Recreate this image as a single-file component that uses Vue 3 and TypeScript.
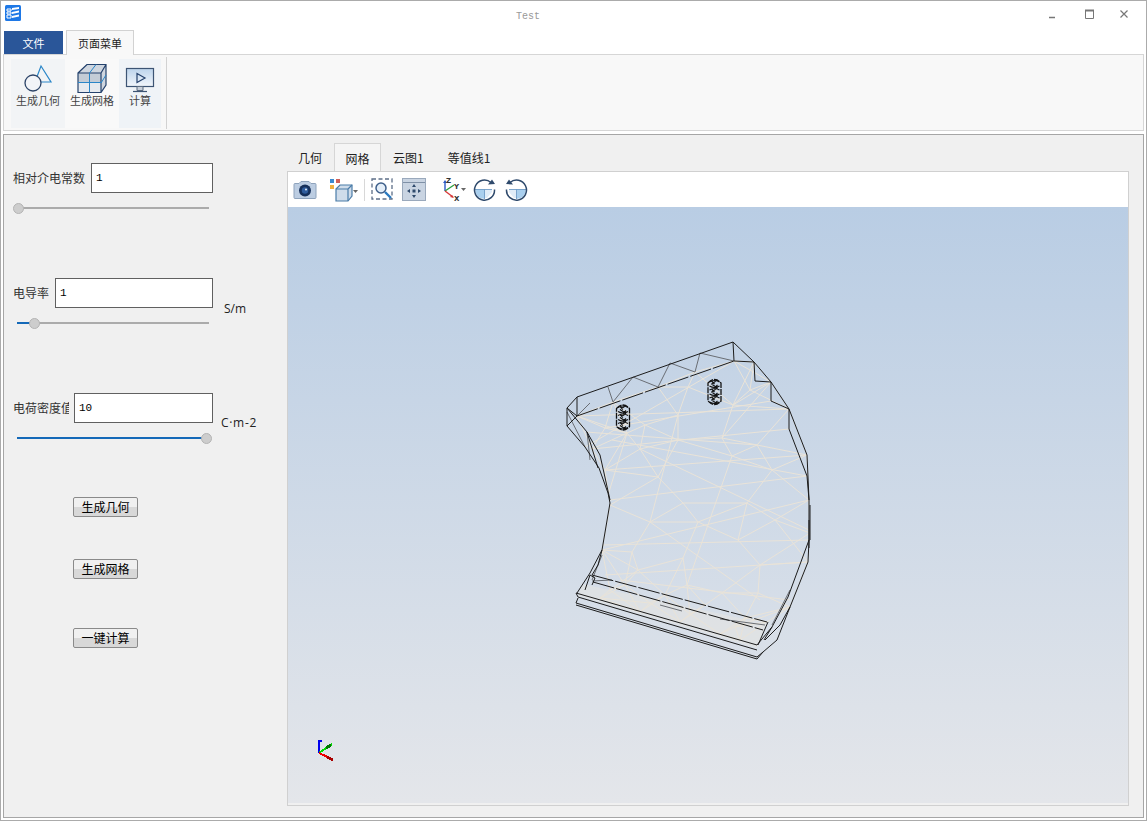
<script setup lang="ts">
type P = [number, number]
const fields = [
  { key: 'a', label: '相对介电常数', value: '1', unit: '', pct: 0, cls: 'f-a' },
  { key: 'b', label: '电导率', value: '1', unit: 'S/m', pct: 9, cls: 'f-b' },
  { key: 'c', label: '电荷密度值', value: '10', unit: 'C·m-2', pct: 100, cls: 'f-c' },
]
const actions = [
  { label: '生成几何', cls: 'a1' },
  { label: '生成网格', cls: 'a2' },
  { label: '一键计算', cls: 'a3' },
]
const tabs = ['几何', '网格', '云图1', '等值线1']

const nodes: P[] = [
  [577,416],[613,402],[658,387],[695,372],[734,361],[754,362],[771,382],[789,409],[807,455],[809,500],[810,533],[808,562],[790,607],[767,622],
  [605,428],[627,433],[645,425],[678,415],[688,387],[733,405],[750,390],
  [592,449],[640,449],[678,440],[722,438],[757,445],[605,470],[658,477],[732,456],[772,470],
  [610,505],[683,503],[747,503],[650,522],[698,522],[775,520],[738,540],
  [602,550],[632,552],[683,558],[760,565],[638,570],[687,585],[722,593],[758,593],
  [610,590],[650,603],[690,614],[735,627],[625,585],[665,595],[705,605],[745,618],[640,612],[680,622],[720,634],[600,598],[740,640]
]
function buildMesh(): string {
  const seen = new Set<string>()
  let d = ''
  nodes.forEach((a, i) => {
    const near = nodes
      .map((b, j) => ({ j, dist: (a[0] - b[0]) ** 2 + ((a[1] - b[1]) * 1.3) ** 2 }))
      .filter((n) => n.j !== i)
      .sort((x, y) => x.dist - y.dist)
      .slice(0, 4)
    near.forEach((n) => {
      const key = i < n.j ? `${i}-${n.j}` : `${n.j}-${i}`
      if (seen.has(key)) return
      seen.add(key)
      d += `M${a[0]} ${a[1]}L${nodes[n.j][0]} ${nodes[n.j][1]}`
    })
  })
  return d
}
const meshPath = buildMesh()
const longLines = 'M577 416L789 409M585 447L734 361M605 428L771 401M592 449L789 429M612 440L807 476M586 432L757 445M605 470L807 455M610 500L807 476M640 449L809 530M602 550L809 500M603 545L809 540M605 575L808 562M620 580L790 600M732 456L687 585M650 522L760 600M627 433L605 505M678 415L650 522M771 382L722 438'
const outline = 'M567 408L577 397L733 342L754 362L771 382L789 409L807 455L809 500L809 540L808 562L790 607L777 640L757 657L576 603L577 593L590 573L602 550L610 503L599 468L585 447L567 426Z'
const blackLines = [
  'M567 408L577 397L733 342L754 362L771 382L789 409L807 455L808 477L809 500L809 540L808 562L790 607L777 640L763 652L757 657',
  'M577 397L577 416M734 361L733 342M734 361L754 362L755 381L771 382L771 401L789 409L789 429L807 476L809 500',
  'M567 408L577 416M567 408L567 426L585 447L599 468L608 493L610 503L602 550L590 573L577 593',
  'M567 408L587 432L600 455L610 500M587 432L598 468M567 426L577 416',
  'M809 520V548M810 505V540',
  'M809 540L788 597L772 627L757 645L576 593L578 597L757 650',
  'M576 603L757 657M576 603L578 598M576 605L757 659L763 652',
  'M602 550L598 565L592 575M790 607L780 625L765 640',
  'M585 590L590 575L595 578L592 585M768 622L758 645M772 627L764 640',
]
const dashedBlack = 'M577 416L734 361M592 575L767 622M593 582L763 630'
const grayLines = 'M608 387L613 402M633 377L613 402M633 377L658 387M670 363L658 387M670 363L695 372M700 353L695 372M700 353L734 361M577 416L590 403M567 412L585 447M587 432L590 460M602 555L592 580M790 590L772 625M592 581L612 580M660 605L682 611M720 619L765 625'
const coils = [
  { x: 623, y: 417.500 },
  { x: 714.500, y: 392 },
]
function coilOuter(cx: number, cy: number): string {
  const w = 6.500
  return `M${cx - w} ${cy - 9}Q${cx} ${cy - 16} ${cx + w} ${cy - 9}L${cx + w} ${cy + 9}Q${cx} ${cy + 16} ${cx - w} ${cy + 9}Z`
}
function coilInner(cx: number, cy: number): string {
  let d = ''
  for (let i = 0; i < 6; i++) {
    const y = cy - 10 + i * 4
    const s = i % 2 ? 1 : -1
    d += `M${cx - 5} ${y}Q${cx} ${y + 3 * s} ${cx + 5} ${y}M${cx - 3 * s} ${y - 2}L${cx + 3 * s} ${y + 2}M${cx + 3 * s} ${y - 1}L${cx} ${y + 2}`
  }
  return d
}
</script>

<template>
  <div class="window">
    <header class="titlebar">
      <svg class="app-icon" width="16" height="16" viewBox="0 0 16 16">
        <rect width="16" height="16" rx="1.500" fill="#1e78e6" />
        <path d="M2 4h4v2H2zM2 7h4v2H2zM2 10h4v3H2z" fill="none" stroke="#fff" stroke-width="1" />
        <path d="M7 3l7-1v2l-7 1zM7 7l7-1.500v2L7 9zM7 11l7-1.500v2L7 13z" fill="#fff" />
      </svg>
      <span class="title">Test</span>
      <div class="win-ctrls">
        <svg width="12" height="12" viewBox="0 0 12 12"><path d="M1 9.500h6" stroke="#777" stroke-width="1.500" /></svg>
        <svg width="12" height="12" viewBox="0 0 12 12"><path d="M2.500 2.500h8v8h-8z" fill="none" stroke="#777" /><path d="M2 2.500h9" stroke="#777" stroke-width="2" /></svg>
        <svg width="12" height="12" viewBox="0 0 12 12"><path d="M2.500 2.500l7 7M9.500 2.500l-7 7" stroke="#777" stroke-width="1.200" /></svg>
      </div>
    </header>

    <nav class="menu-tabs">
      <span class="file-tab">文件</span>
      <span class="page-tab">页面菜单</span>
    </nav>

    <section class="ribbon">
      <button class="rb rb-geo">
        <svg width="32" height="28" viewBox="0 0 32 28">
          <path d="M19 2L29 18H13z" fill="none" stroke="#2a86c8" stroke-width="1.200" />
          <circle cx="11" cy="19" r="8" fill="#f2f4f8" stroke="#2c4468" stroke-width="1.300" />
        </svg>
        <span>生成几何</span>
      </button>
      <button class="rb rb-mesh">
        <svg width="32" height="29" viewBox="0 0 32 29">
          <path d="M2 9L11 .5H30V21L25 28.500H2z" fill="#cfd6df" />
          <path d="M2 9H25V18H2z" fill="#c4ccd6" />
          <path d="M2 18H25V28.500H2z" fill="#e6eaef" />
          <path d="M2 9L11 .5H30V21L25 28.500H2zM2 9H25V28.500M25 9L30 .5" fill="none" stroke="#24416c" stroke-width="1.200" />
          <path d="M13.500 9V28.500M2 18.500H25M20 .5L13.500 9M25 19L30 11" fill="none" stroke="#2a86c8" stroke-width="1" />
        </svg>
        <span>生成网格</span>
      </button>
      <button class="rb rb-calc">
        <svg width="30" height="26" viewBox="0 0 30 26">
          <defs>
            <linearGradient id="scr" x1="0" y1="0" x2="0" y2="1">
              <stop offset="0" stop-color="#bcd4ec" /><stop offset="1" stop-color="#f2f6fb" />
            </linearGradient>
          </defs>
          <rect x="1.500" y="1.500" width="27" height="18" fill="url(#scr)" stroke="#3c5474" stroke-width="1.200" />
          <path d="M12 6.500L20 11L12 15.500z" fill="none" stroke="#24416c" stroke-width="1.200" />
          <path d="M12 19.500h6v4h-6z" fill="#c8d0da" stroke="#5c6c80" />
          <path d="M8 24.500h14" stroke="#3c5474" stroke-width="1.200" />
        </svg>
        <span>计算</span>
      </button>
      <i class="rb-sep"></i>
    </section>

    <main class="main">
      <aside class="side">
        <div v-for="f in fields" :key="f.key" class="field" :class="f.cls">
          <div class="row">
            <label class="lbl">{{ f.label }}</label>
            <input class="inp" :value="f.value" readonly />
            <span v-if="f.unit" class="unit">{{ f.unit }}</span>
          </div>
          <div class="slider">
            <i class="fill" :style="{ width: f.pct + '%' }"></i>
            <i class="knob" :style="{ left: f.pct + '%' }"></i>
          </div>
        </div>
        <div class="actions">
          <button v-for="a in actions" :key="a.label" class="act" :class="a.cls">{{ a.label }}</button>
        </div>
      </aside>

      <section class="right">
        <div class="view-tabs">
          <span v-for="(t, i) in tabs" :key="t" class="vt" :class="{ on: i === 1 }">{{ t }}</span>
        </div>
        <div class="frame">
          <div class="toolbar">
            <svg class="ti cam" width="24" height="20" viewBox="0 0 24 20">
              <path d="M1 4.500Q1 3.500 2 3.500h4l2-2h8l2 2h4q1 0 1 1v13q0 1-1 1H2q-1 0-1-1z" fill="#bccde2" stroke="#8ea3bc" />
              <circle cx="12" cy="10.500" r="6" fill="#16305a" />
              <circle cx="12" cy="10.500" r="3.200" fill="#2f5c9c" />
              <circle cx="13" cy="9.500" r="1" fill="#e8f0f8" />
            </svg>
            <svg class="ti cube" width="29" height="24" viewBox="0 0 29 24">
              <rect x="1" y="1" width="4" height="4" fill="#3a8ad0" /><rect x="7" y="1" width="4" height="4" fill="#d0605a" />
              <rect x="1" y="7" width="4" height="4" fill="#f0b040" />
              <path d="M7 11L11 7H23V18L19 23H7z" fill="#cfdcea" stroke="#4a7ca8" stroke-width="1.200" />
              <path d="M7 11H19V23M19 11L23 7" fill="none" stroke="#4a7ca8" stroke-width="1.200" />
              <path d="M24 12h5l-2.500 3z" fill="#666" />
            </svg>
            <i class="tb-sep"></i>
            <svg class="ti zoom" width="22" height="23" viewBox="0 0 22 23">
              <path d="M1 1h20v20H1z" fill="none" stroke="#5d6f88" stroke-width="1.300" stroke-dasharray="4 2.500" />
              <circle cx="10" cy="10" r="5" fill="#e4eef8" stroke="#3e5f8a" stroke-width="1.500" />
              <path d="M14 14l6 6" stroke="#2a7ac0" stroke-width="2.400" />
            </svg>
            <svg class="ti pan" width="24" height="23" viewBox="0 0 24 23">
              <rect x="0.500" y="0.500" width="23" height="22" fill="#c9d4e2" stroke="#9aa9bc" />
              <path d="M1 4.500h22" stroke="#7f90a6" />
              <path d="M12 6l2 3h-4zM12 20l-2-3h4zM5 13l3-2v4zM19 13l-3 2v-4z" fill="#2f4a6c" />
              <rect x="10.500" y="11.500" width="3" height="3" fill="#2f4a6c" />
            </svg>
            <svg class="ti axes" width="26" height="25" viewBox="0 0 26 25">
              <path d="M4 14V5" stroke="#2a5ac8" stroke-width="1.400" /><path d="M4 3l2 3H2z" fill="#2a5ac8" />
              <path d="M4 14l9-6" stroke="#2aa040" stroke-width="1.400" />
              <path d="M4 14l8 6" stroke="#d83a3a" stroke-width="1.400" /><path d="M13 21l-4-1 2-2z" fill="#d83a3a" />
              <text x="5" y="6" class="ax">Z</text><text x="13" y="12" class="ax">Y</text><text x="13" y="24" class="ax">X</text>
              <path d="M20 11h5l-2.500 3z" fill="#666" />
            </svg>
            <svg class="ti rot" width="23" height="23" viewBox="0 0 23 23">
              <path d="M11.500 11.500V21A9.500 9.500 0 0 1 2 11.500z" fill="#a9cfee" />
              <path d="M11.500 11.500H19V14L14 20H11.500z" fill="#e0ecf8" />
              <path d="M11.500 11.500V21M2 11.500H19" fill="none" stroke="#5f90c0" stroke-width="0.800" />
              <path d="M18 4.500A10 10 0 1 0 21.500 11.500" fill="none" stroke="#2f4a6c" stroke-width="1.500" />
              <path d="M22 6l-7 .500 4-5z" fill="#2f4a6c" />
            </svg>
            <svg class="ti rot2" width="23" height="23" viewBox="0 0 23 23">
              <path d="M11.500 11.500V21A9.500 9.500 0 0 0 21 11.500z" fill="#a9cfee" />
              <path d="M11.500 11.500H4V14L9 20H11.500z" fill="#e0ecf8" />
              <path d="M11.500 11.500V21M4 11.500H21" fill="none" stroke="#5f90c0" stroke-width="0.800" />
              <path d="M5 4.500A10 10 0 1 1 1.500 11.500" fill="none" stroke="#2f4a6c" stroke-width="1.500" />
              <path d="M1 6l7 .500-4-5z" fill="#2f4a6c" />
            </svg>
          </div>
          <div class="viewport">
            <svg class="scene" width="840" height="596" viewBox="288 207 840 596">
              <defs>
                <clipPath id="hull"><path :d="outline" /></clipPath>
              </defs>
              <g clip-path="url(#hull)">
                <path d="M582 584L767 624L757 648L578 596z" fill="#efe9de" opacity="0.35" />
                <path :d="meshPath" fill="none" stroke="#e9e3d8" stroke-width="1" />
                <path :d="longLines" fill="none" stroke="#e9e3d8" stroke-width="1" />
              </g>
              <path :d="grayLines" fill="none" stroke="#6a6e74" stroke-width="1" />
              <path v-for="(b, i) in blackLines" :key="i" :d="b" fill="none" stroke="#1c1c1c" stroke-width="1" />
              <path :d="dashedBlack" fill="none" stroke="#1c1c1c" stroke-width="1" stroke-dasharray="22 2" />
              <g v-for="c in coils" :key="c.x">
                <path :d="coilOuter(c.x, c.y)" fill="none" stroke="#111" stroke-width="1.300" stroke-dasharray="6 1" />
                <path :d="coilInner(c.x, c.y)" fill="none" stroke="#111" stroke-width="1.100" />
              </g>
              <g shape-rendering="crispEdges">
                <path d="M319 753V740M319 741h3" fill="none" stroke="#0000ee" stroke-width="2" />
                <path d="M319 753L332 744" stroke="#00dd00" stroke-width="2" />
                <path d="M326 748L331 745" stroke="#007700" stroke-width="3" />
                <path d="M319 753L332 759" stroke="#ee0000" stroke-width="2" />
                <path d="M327 757L333 760" stroke="#aa0000" stroke-width="3" />
              </g>
            </svg>
          </div>
        </div>
      </section>
    </main>
  </div>
</template>

<style>
html, body { margin: 0; background: #fff; }
</style>

<style scoped>
.window {
  width: 1147px;
  height: 821px;
  box-sizing: border-box;
  border: 1px solid #ababab;
  background: #fff;
  display: flex;
  flex-direction: column;
  font-family: "Noto Sans CJK SC", "Liberation Sans", sans-serif;
  font-size: 12px;
  color: #333;
  overflow: hidden;
}
.titlebar {
  height: 29px;
  flex: none;
  position: relative;
  display: flex;
  align-items: center;
  background: #fff;
}
.app-icon { margin: 0 0 6px 4px; }
.title {
  position: absolute;
  left: 515px;
  top: 10px;
  font: 10px "Liberation Mono", monospace;
  color: #999;
}
.win-ctrls {
  margin-left: auto;
  margin-right: 16px;
  margin-bottom: 3px;
  display: flex;
  gap: 23px;
}
.menu-tabs {
  height: 24px;
  flex: none;
  display: flex;
  align-items: flex-end;
  padding-left: 3px;
  gap: 3px;
}
.file-tab {
  width: 59px;
  height: 23px;
  background: #2a5699;
  color: #fff;
  font-size: 11px;
  display: flex;
  align-items: center;
  justify-content: center;
}
.page-tab {
  width: 66px;
  height: 24px;
  box-sizing: content-box;
  border: 1px solid #d2d2d2;
  border-bottom: 0;
  background: #f8f8f8;
  color: #222;
  font-size: 11px;
  display: flex;
  align-items: center;
  justify-content: center;
  position: relative;
  top: 1px;
  z-index: 1;
}
.ribbon {
  height: 77px;
  flex: none;
  margin: 0 2px;
  box-sizing: border-box;
  border: 1px solid #d6d6d6;
  background: #f8f8f8;
  display: flex;
  padding: 4px 0 2px 7px;
}
.rb {
  border: 0;
  padding: 5px 0 0;
  background: transparent;
  font: inherit;
  font-size: 11px;
  color: #444;
  display: flex;
  flex-direction: column;
  align-items: center;
  height: 69px;
}
.rb span { line-height: 16px; }
.rb-geo { width: 54px; background: #f2f4f6; }
.rb-geo svg { margin-bottom: 0; }
.rb-mesh { width: 54px; background: #f9f9f9; }
.rb-mesh svg { margin-bottom: -1px; }
.rb-calc { width: 42px; background: #eff3f7; }
.rb-calc svg { margin-top: 3px; margin-bottom: -1px; }
.rb-sep {
  width: 1px;
  height: 72px;
  background: #d2d2d2;
  margin-left: 5px;
  margin-top: -2px;
}
.main {
  flex: 1;
  margin: 3px 2px 2px;
  box-sizing: border-box;
  border: 1px solid #a6a6a6;
  background: #f0f0f0;
  display: flex;
  min-height: 0;
}
.side {
  width: 283px;
  flex: none;
  box-sizing: border-box;
  padding: 28px 0 0 9px;
}
.field { height: 115px; }
.row { display: flex; height: 30px; align-items: flex-start; }
.lbl { line-height: 30px; white-space: nowrap; overflow: hidden; color: #333; flex: none; }
.f-a .lbl { width: 78px; }
.f-b .lbl { width: 42px; }
.f-c .lbl { width: 56px; margin-right: 5px; }
.inp {
  box-sizing: border-box;
  height: 30px;
  flex: none;
  border: 1px solid #606060;
  background: #fff;
  padding: 0 4px;
  font: 11px "Liberation Mono", monospace;
  color: #000;
  outline: none;
}
.f-a .inp { width: 122px; }
.f-b .inp { width: 158px; }
.f-c .inp { width: 139px; }
.unit { font: 12px "Open Sans", sans-serif; color: #222; white-space: nowrap; }
.f-b .unit { margin: 22px 0 0 11px; }
.f-c .unit { margin: 21px 0 0 8px; letter-spacing: 0.7px; }
.slider {
  position: relative;
  height: 2px;
  background: #ababab;
  margin-top: 14px;
}
.f-a .slider { margin-left: 5px; width: 191px; }
.f-b .slider { margin-left: 4px; width: 192px; }
.f-c .slider { margin-left: 4px; width: 189px; }
.fill { position: absolute; left: 0; top: 0; height: 2px; background: #1469b8; }
.knob {
  position: absolute;
  top: -4.500px;
  margin-left: -5.500px;
  width: 11px;
  height: 11px;
  box-sizing: border-box;
  border-radius: 50%;
  background: #cdcdcd;
  border: 1px solid #b4b4b4;
}
.actions {
  display: flex;
  flex-direction: column;
  align-items: flex-start;
  padding-left: 60px;
  margin-top: -11px;
}
.act {
  width: 65px;
  height: 20px;
  padding: 0;
  box-sizing: border-box;
  border: 1px solid #8a8a8a;
  border-radius: 2px;
  background: linear-gradient(#f0f0f0 0 50%, #d8d8d8 50% 100%);
  font: inherit;
  font-size: 12px;
  color: #000;
  line-height: 16px;
}
.a2 { margin-top: 42px; }
.a3 { margin-top: 49px; }
.right {
  flex: 1;
  min-width: 0;
  display: flex;
  flex-direction: column;
  padding: 8px 14px 11px 0;
}
.view-tabs {
  height: 28px;
  flex: none;
  display: flex;
  align-items: stretch;
  padding-left: 1px;
}
.vt {
  padding: 0 11px;
  line-height: 29px;
  color: #222;
  box-sizing: border-box;
}
.vt:nth-child(1) { padding-left: 10px; padding-right: 12px; }
.vt:nth-child(3) { margin-left: 1px; padding-right: 24px; }
.vt:nth-child(4) { padding-left: 0; }
.vt.on {
  width: 47px;
  padding: 0;
  text-align: center;
  border: 1px solid #d6d6d6;
  border-bottom: 0;
  background: #f5f5f5;
}
.frame {
  flex: 1;
  box-sizing: border-box;
  border: 1px solid #d0d0d0;
  padding-bottom: 2px;
  display: flex;
  flex-direction: column;
  min-height: 0;
}
.toolbar {
  height: 35px;
  flex: none;
  background: #fff;
  display: flex;
  align-items: center;
  padding-left: 5px;
}
.ti { flex: none; }
.cube { margin-left: 12px; }
.tb-sep { width: 1px; height: 22px; background: #d8d8d8; margin-left: 6px; }
.zoom { margin-left: 6px; }
.pan { margin-left: 9px; }
.axes { margin-left: 15px; }
.rot { margin-left: 6px; }
.rot2 { margin-left: 9px; }
.ax { font: 700 7px "DejaVu Sans", sans-serif; fill: #333; }
.viewport {
  flex: 1;
  min-height: 0;
  position: relative;
  background: linear-gradient(#b9cde4, #e4e6ea);
}
.scene { position: absolute; left: 0; top: 0; }
</style>
